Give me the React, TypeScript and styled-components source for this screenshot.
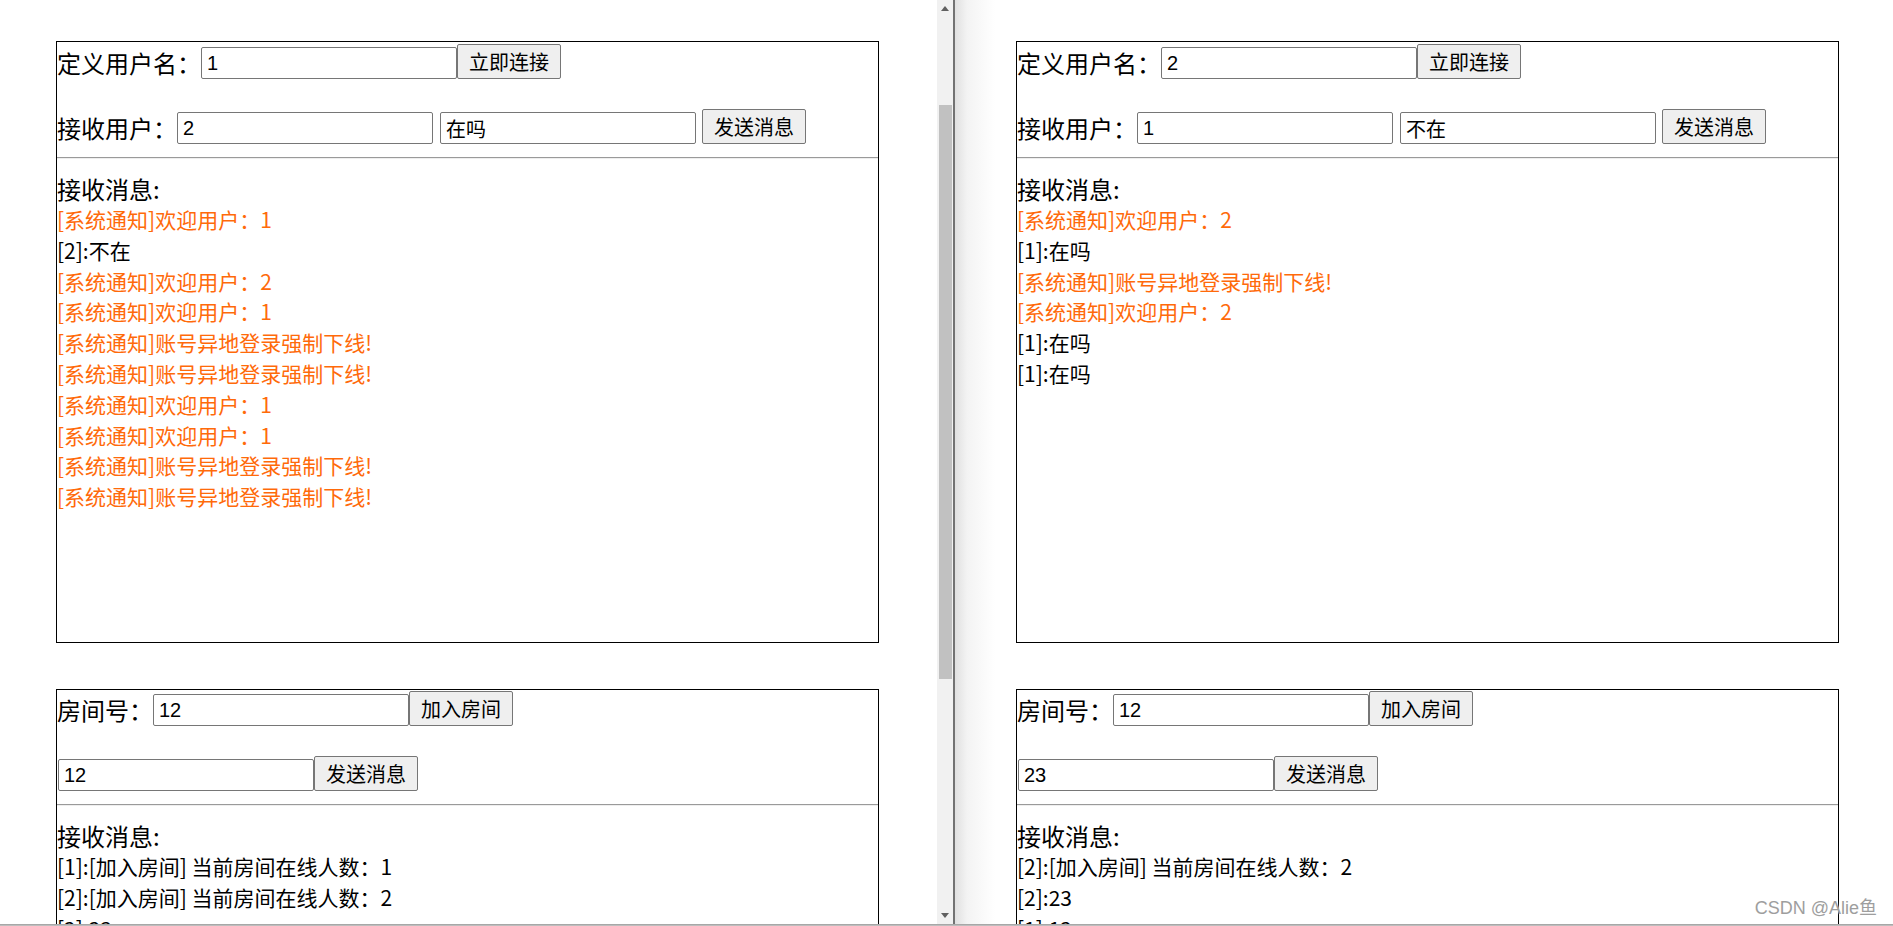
import React from 'react'
import styled, { createGlobalStyle } from 'styled-components'

const GlobalStyle = createGlobalStyle`
  html, body {
    margin: 0;
    padding: 0;
    background: #fff;
  }
  body {
    font-family: "Noto Sans CJK SC", "Noto Sans", sans-serif;
    color: #000;
  }
`

const Screen = styled.div`
  position: relative;
  width: 1893px;
  height: 926px;
  overflow: hidden;
  display: flex;
  flex-direction: column;
`

const Windows = styled.div`
  display: flex;
  height: 924px;
`

const Pane = styled.div<{ $inset: number; $shadow?: boolean }>`
  box-sizing: border-box;
  flex: ${(p) => (p.$shadow ? '1 1 auto' : '0 0 937px')};
  height: 100%;
  overflow: hidden;
  padding: 41px 0 0 ${(p) => p.$inset}px;
  display: flex;
  flex-direction: column;
  gap: 46px;
  background: ${(p) =>
    p.$shadow
      ? 'linear-gradient(to right, #e0e0e0 0, #f3f3f3 12px, #fff 40px)'
      : '#fff'};
`

const Scrollbar = styled.div`
  flex: 0 0 16px;
  display: flex;
  flex-direction: column;
  align-items: center;
  background: #f1f1f1;
`

const Arrow = styled.div`
  height: 17px;
  width: 100%;
  display: flex;
  align-items: center;
  justify-content: center;
`

const Thumb = styled.div<{ $top: number; $size: number }>`
  width: 13px;
  margin: ${(p) => p.$top}px 0 0 1px;
  height: ${(p) => p.$size}px;
  background: #c1c1c1;
`

const Filler = styled.div`
  flex: 1;
`

const Divider = styled.div`
  flex: 0 0 2px;
  background: #727272;
`

const BottomEdge = styled.div`
  height: 2px;
  background: linear-gradient(#9c9c9c, #c8c8c8);
`

const Panel = styled.section`
  box-sizing: border-box;
  flex: none;
  width: 823px;
  height: 602px;
  border: 1px solid #000;
`

const Row = styled.div<{ $top: number }>`
  display: flex;
  align-items: flex-end;
  height: 35px;
  margin-top: ${(p) => p.$top}px;
`

const Label = styled.span`
  font-size: 24px;
  line-height: 32px;
  white-space: nowrap;
`

const Field = styled.input<{ $gap?: number }>`
  box-sizing: border-box;
  width: 256px;
  height: 32px;
  margin: 0 0 0 ${(p) => p.$gap || 0}px;
  padding: 0 5px;
  border: 1px solid #767676;
  border-radius: 2px;
  background: #fff;
  color: #000;
  font-family: "Liberation Sans", "Noto Sans CJK SC", sans-serif;
  font-size: 20px;
  outline: none;
`

const Button = styled.button<{ $gap?: number }>`
  box-sizing: border-box;
  height: 35px;
  margin: 0 0 0 ${(p) => p.$gap || 0}px;
  padding: 0 11px;
  border: 1px solid #767676;
  border-radius: 2px;
  background: #efefef;
  color: #000;
  font-family: "Noto Sans CJK SC", sans-serif;
  font-size: 20px;
  line-height: 1;
`

const Rule = styled.hr`
  margin: 13px 0 0;
  height: 0;
  border: none;
  border-top: 1px solid #9a9a9a;
  border-bottom: 1px solid #eeeeee;
`

const Heading = styled.div`
  margin-top: 14px;
  font-size: 24px;
  line-height: 31px;
`

const Message = styled.div<{ $system?: boolean }>`
  font-size: 21px;
  line-height: 30.8px;
  white-space: nowrap;
  color: ${(p) => (p.$system ? '#ff6a0a' : '#000')};
`

const Watermark = styled.div`
  position: absolute;
  right: 16px;
  bottom: 7px;
  font-family: "Liberation Sans", "Noto Sans CJK SC", sans-serif;
  font-size: 18px;
  color: #9e9e9e;
  text-shadow: 0 0 2px #fff;
`

type Line = { text: string; system?: boolean }

type ChatProps = {
  user: string
  target: string
  draft: string
  lines: Line[]
}

const ChatPanel = ({ user, target, draft, lines }: ChatProps) => (
  <Panel>
    <Row $top={2}>
      <Label>定义用户名：</Label>
      <Field defaultValue={user} />
      <Button>立即连接</Button>
    </Row>
    <Row $top={30}>
      <Label>接收用户：</Label>
      <Field defaultValue={target} />
      <Field $gap={7} defaultValue={draft} />
      <Button $gap={6}>发送消息</Button>
    </Row>
    <Rule />
    <Heading>接收消息:</Heading>
    {lines.map((l, i) => (
      <Message key={i} $system={l.system}>
        {l.text}
      </Message>
    ))}
  </Panel>
)

type RoomProps = {
  room: string
  draft: string
  lines: string[]
}

const RoomPanel = ({ room, draft, lines }: RoomProps) => (
  <Panel>
    <Row $top={1}>
      <Label>房间号：</Label>
      <Field defaultValue={room} />
      <Button>加入房间</Button>
    </Row>
    <Row $top={30}>
      <Field $gap={1} defaultValue={draft} />
      <Button>发送消息</Button>
    </Row>
    <Rule />
    <Heading>接收消息:</Heading>
    {lines.map((l, i) => (
      <Message key={i}>{l}</Message>
    ))}
  </Panel>
)

const welcome = (n: string): Line => ({ text: `[系统通知]欢迎用户：${n}`, system: true })
const kicked: Line = { text: '[系统通知]账号异地登录强制下线!', system: true }

const leftLines: Line[] = [
  welcome('1'),
  { text: '[2]:不在' },
  welcome('2'),
  welcome('1'),
  kicked,
  kicked,
  welcome('1'),
  welcome('1'),
  kicked,
  kicked,
]

const rightLines: Line[] = [
  welcome('2'),
  { text: '[1]:在吗' },
  kicked,
  welcome('2'),
  { text: '[1]:在吗' },
  { text: '[1]:在吗' },
]

const ArrowIcon = ({ up }: { up?: boolean }) => (
  <svg width="8" height="5" viewBox="0 0 8 5">
    <polygon points={up ? '0,5 8,5 4,0' : '0,0 8,0 4,5'} fill="#606060" />
  </svg>
)

const App = () => {
  return (
    <Screen>
      <GlobalStyle />
      <Windows>
        <Pane $inset={56}>
          <ChatPanel user="1" target="2" draft="在吗" lines={leftLines} />
          <RoomPanel
            room="12"
            draft="12"
            lines={[
              '[1]:[加入房间] 当前房间在线人数：1',
              '[2]:[加入房间] 当前房间在线人数：2',
              '[2]:23',
              '[1]:12',
            ]}
          />
        </Pane>
        <Scrollbar>
          <Arrow>
            <ArrowIcon up />
          </Arrow>
          <Thumb $top={88} $size={574} />
          <Filler />
          <Arrow>
            <ArrowIcon />
          </Arrow>
        </Scrollbar>
        <Divider />
        <Pane $inset={61} $shadow>
          <ChatPanel user="2" target="1" draft="不在" lines={rightLines} />
          <RoomPanel
            room="12"
            draft="23"
            lines={[
              '[2]:[加入房间] 当前房间在线人数：2',
              '[2]:23',
              '[1]:12',
              '[1]:12',
            ]}
          />
        </Pane>
      </Windows>
      <BottomEdge />
      <Watermark>CSDN @Alie鱼</Watermark>
    </Screen>
  )
}

export default App
